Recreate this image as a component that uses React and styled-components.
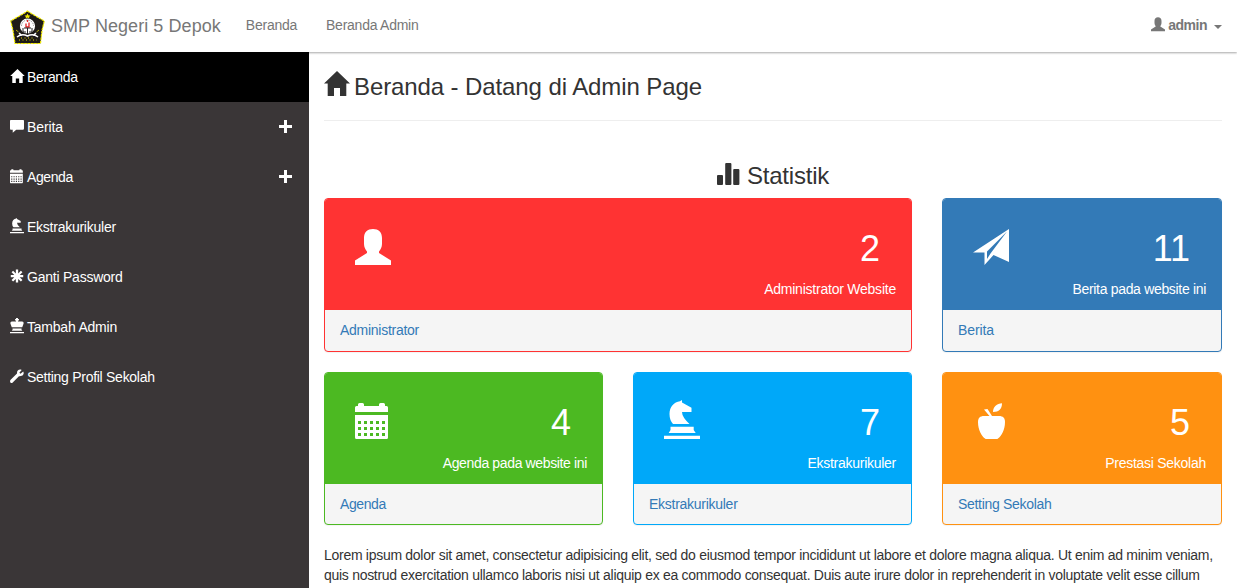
import React from "react";
import styled, { createGlobalStyle } from "styled-components";

const Global = createGlobalStyle`
  *, *::before, *::after { box-sizing: border-box; }
  html, body { margin: 0; height: 100%; overflow: hidden; }
  #root { height: 100%; }
  body {
    background: #fff;
    color: #333;
    font: 14px/20px "Liberation Sans", Arial, sans-serif;
  }
  a { text-decoration: none; }
`;

const Page = styled.div`
  display: flex;
  flex-direction: column;
  height: 100vh;
  overflow: hidden;
`;

const Navbar = styled.nav`
  flex: none;
  display: flex;
  align-items: center;
  height: 52px;
  padding: 0 15px 0 10px;
  box-shadow: 0 1px 2px rgba(0, 0, 0, 0.35);
`;

const Brand = styled.a`
  display: flex;
  align-items: center;
  gap: 6px;
  color: #777;
  font-size: 18px;
  letter-spacing: 0.06px;
  padding-bottom: 1px;
`;

const Crest = styled.svg`
  width: 35px;
  height: 35px;
  margin-top: 3px;
`;

const NavLink = styled.a`
  color: #777;
  margin-left: ${(p) => p.$gap}px;
  padding-bottom: 2px;
  letter-spacing: -0.25px;
`;

const UserMenu = styled.a`
  display: flex;
  align-items: center;
  margin-left: auto;
  padding-bottom: 2px;
  color: #777;
  font-weight: bold;
`;

const Caret = styled.span`
  margin: 3px 0 0 7px;
  border: 4px solid transparent;
  border-top-color: #777;
  border-bottom: 0;
`;

const Body = styled.div`
  flex: 1;
  display: flex;
  min-height: 0;
`;

const Sidebar = styled.aside`
  position: relative;
  flex: none;
  width: 309px;
  background: #3a3637;
`;

const SideItem = styled.a`
  display: flex;
  align-items: center;
  height: 50px;
  padding: 0 17px 0 10px;
  color: #fff;
  background: ${(p) => (p.$active ? "#000" : "transparent")};
`;

const SideLabel = styled.span`
  flex: 1;
  margin-left: 3px;
  letter-spacing: ${(p) => p.$spacing || 0}px;
`;

const Icon = styled.svg`
  flex: none;
  display: block;
  overflow: visible;
  fill: currentColor;
  width: ${(p) => p.$w}px;
  height: ${(p) => p.$h}px;
  margin-top: ${(p) => p.$drop || 0}px;
`;

const Main = styled.main`
  flex: 1;
  min-width: 0;
  padding: 0 15px;
`;

const PageTitle = styled.h1`
  display: flex;
  align-items: center;
  gap: 4px;
  height: 69px;
  margin: 0;
  padding-top: 2px;
  border-bottom: 1px solid #eee;
  color: #333;
  font-size: 24px;
  font-weight: normal;
  letter-spacing: -0.1px;
`;

const SectionTitle = styled.h2`
  display: flex;
  align-items: center;
  justify-content: center;
  gap: 7px;
  height: 26px;
  margin: 42px 0 9.4px;
  color: #333;
  font-size: 24px;
  font-weight: normal;
  letter-spacing: -0.2px;
`;

const CardGrid = styled.div`
  display: grid;
  grid-template-columns: 279px 279px 1fr;
  gap: 20px 30px;
`;

const Card = styled.section`
  grid-column: span ${(p) => p.$span || 1};
  height: 153.4px;
  border: 1px solid ${(p) => p.$color};
  border-radius: 4px;
  overflow: hidden;
  background: #f5f5f5;
  box-shadow: 0 1px 1px rgba(0, 0, 0, 0.05);
`;

const CardTop = styled.div`
  display: flex;
  justify-content: space-between;
  height: 111px;
  padding: 27px 15px 0 30px;
  background: ${(p) => p.$color};
  color: #fff;
`;

const Figures = styled.div`
  display: flex;
  flex-direction: column;
  align-items: flex-end;
`;

const Count = styled.span`
  margin: 2.75px 16px 0 0;
  font-size: 36px;
  line-height: 40px;
`;

const Caption = styled.span`
  margin-top: 10.25px;
  letter-spacing: ${(p) => p.$spacing}px;
`;

const CardLink = styled.a`
  display: block;
  padding: 10px 15px;
  color: #337ab7;
  letter-spacing: ${(p) => p.$spacing}px;
`;

const Copy = styled.p`
  margin: 20px 0 0;
  white-space: nowrap;
  letter-spacing: -0.286px;
`;

const shapes = {
  user: "M18 3C23.5 3 27 6 27 12V18C27 21 25.5 24 24 25.5V27L36 34.5V39H0V34.5L12 27V25.5C10.5 24 9 21 9 18V12C9 6 12.5 3 18 3Z",
  plane: "M36 3L0 26.5H11.5V39L20.5 29L36 36ZM34 5.5L17.5 27.5L14 33V25.5Z",
  calendar:
    "M3 6V4.5Q3 3 4.500 3H7.500Q9 3 9 4.500V6H24V4.500Q24 3 25.500 3H28.500Q30 3 30 4.500V6H31.500Q33 6 33 7.500V12H0V7.500Q0 6 1.500 6ZM0 15H33V37.500Q33 39 31.500 39H1.500Q0 39 0 37.500Z" +
    [21, 27, 33].map((y) => [3, 9, 15, 21, 27].map((x) => `M${x} ${y}v3h3v-3Z`).join("")).join(""),
  knight:
    "M18 0V2.500L27.500 7.700V12H18Q18 17 25.500 24H9Q5.500 20 5.500 14C5.500 7 10 2 16 1.300ZM6.500 26.700H29.700V30L31.700 33H4.700L6.500 30ZM0 35.700H36V39H0Z",
  apple:
    "M5 22C5 18 7 16 11 16H16.500L11 9.500L14.500 9L19 16H26C30 16 32 18 32 22C32 30 28.500 36 25 38.500Q24.500 39 23.500 39H13.500Q12.500 39 12 38.500C8.500 36 5 30 5 22ZM29 3.300C29 9 26 12 20 12C20 7 24 3.500 29 3.300Z",
  king: "M15.500 0H20.500V2.500H23V6.500H20.500V9H31Q36 9 35 14L31.500 24H4.500L1 14Q0 9 5 9H15.500V6.500H13V2.500H15.500ZM6.500 26.700H29.700V30L31.700 33H4.700L6.500 30ZM0 35.700H36V39H0Z",
  comment: "M2 5H34Q36 5 36 7V27Q36 30 33 30H16L7 38V30H2Q0 30 0 27V7Q0 5 2 5Z",
  asterisk:
    "M15 4H21V14L28 7L32 11L25 18H34V24H25L32 31L28 35L21 28V37H15V28L8 35L4 31L11 24H2V18H11L4 11L8 7L15 14Z",
  wrench: "M34 9L27 15L24 12L30 5C25 2 17 5 18 14L1 31Q-1 34 1 37Q4 40 7 37L23 21C32 22 38 16 34 9Z",
};

const Glyph = ({ name, size = 14, drop }) => (
  <Icon $w={size} $h={(size * 40) / 36} $drop={drop} viewBox="0 0 36 40">
    <path fillRule="evenodd" d={shapes[name]} />
  </Icon>
);

const Home = ({ w, h, box, drop }) => (
  <Icon $w={box} $h={h} $drop={drop} viewBox={`0 0 ${(box / w) * 26} 25`}>
    <path d="M13 0L26 12.500H22.300V25H16V17H10V25H3.700V12.500H0Z" />
  </Icon>
);

const Plus = () => (
  <Icon $w={13} $h={13} $drop={-1} viewBox="0 0 13 13">
    <path d="M5 0H8V5H13V8H8V13H5V8H0V5H5Z" />
  </Icon>
);

const Stats = () => (
  <Icon $w={23} $h={22} $drop={-4} viewBox="0 0 23 22">
    <rect x="0" y="12" width="6" height="10" rx="1" />
    <rect x="8.200" y="0" width="6.200" height="22" rx="1" />
    <rect x="16.200" y="6" width="6.200" height="16" rx="1" />
  </Icon>
);

const SchoolCrest = () => (
  <Crest viewBox="0 0 35 35">
    <path d="M17.500 1L22 4L34.300 11L32 20.500L30.500 33.500H5L3 20.500L.7 11L13 4Z" fill="#1d1a17" stroke="#f5ee00" strokeWidth="1.200" strokeDasharray="2.500 .8" />
    <circle cx="17.500" cy="16" r="7.600" fill="#fff" />
    <path d="M11.500 16A6 6 0 0 1 23.500 16" fill="none" stroke="#777" strokeWidth=".8" strokeDasharray="1.500 1" />
    <path d="M17.500 3.500L18.500 5.500H20.500L19 7L19.500 8.500L17.500 7.500L15.500 8.500L16 7L14.500 5.500H16.500Z" fill="#f5ee00" />
    <path d="M16 13.500V17H19V12.500M17.500 10V12" fill="none" stroke="#e02020" strokeWidth="1.300" />
    <path d="M13 18V22H16M22 18V22H19M17.500 18V24M14 18H21" fill="none" stroke="#222" strokeWidth="1" />
    <path d="M7 27Q12 23 17.500 26Q23 23 28 27M9 23L12 25.500M26 23L23 25.500" fill="none" stroke="#fff" strokeWidth="1.500" />
    <path d="M9 30H27M11 28H24" stroke="#e8df00" strokeWidth="1" strokeDasharray="1 2.500" />
    <path d="M6 20L8.500 22M29 20L26.500 22" stroke="#b5ae10" strokeWidth="1" />
  </Crest>
);

const menu = [
  { label: "Berita", icon: "comment", spacing: -0.12, expandable: true },
  { label: "Agenda", icon: "calendar", spacing: -0.4, expandable: true },
  { label: "Ekstrakurikuler", icon: "knight", spacing: -0.25 },
  { label: "Ganti Password", icon: "asterisk", spacing: -0.23 },
  { label: "Tambah Admin", icon: "king", spacing: -0.22 },
  { label: "Setting Profil Sekolah", icon: "wrench", spacing: -0.28 },
];

const cards = [
  { icon: "user", count: 2, caption: "Administrator Website", tight: -0.23, link: "Administrator", linkTight: -0.27, color: "#ff3333", span: 2 },
  { icon: "plane", count: 11, caption: "Berita pada website ini", tight: -0.32, link: "Berita", linkTight: -0.12, color: "#337ab7" },
  { icon: "calendar", count: 4, caption: "Agenda pada website ini", tight: -0.36, link: "Agenda", linkTight: -0.4, color: "#4cb922" },
  { icon: "knight", count: 7, caption: "Ekstrakurikuler", tight: -0.27, link: "Ekstrakurikuler", linkTight: -0.27, color: "#00a8f9" },
  { icon: "apple", count: 5, caption: "Prestasi Sekolah", tight: -0.27, link: "Setting Sekolah", linkTight: -0.3, color: "#ff9111" },
];

export default function App() {
  return (
    <Page>
      <Global />
      <Navbar>
        <Brand>
          <SchoolCrest />
          <span>SMP Negeri 5 Depok</span>
        </Brand>
        <NavLink $gap={25}>Beranda</NavLink>
        <NavLink $gap={29}>Beranda Admin</NavLink>
        <UserMenu>
          <Glyph name="user" drop={-3} />
          <SideLabel $spacing={-0.5}>admin</SideLabel>
          <Caret />
        </UserMenu>
      </Navbar>
      <Body>
        <Sidebar>
          <SideItem $active>
            <Home w={15} h={14} box={14} drop={-2} />
            <SideLabel $spacing={-0.3}>Beranda</SideLabel>
          </SideItem>
          {menu.map((m) => (
            <SideItem key={m.label}>
              <Glyph name={m.icon} drop={-3} />
              <SideLabel $spacing={m.spacing}>{m.label}</SideLabel>
              {m.expandable && <Plus />}
            </SideItem>
          ))}
        </Sidebar>
        <Main>
          <PageTitle>
            <Home w={26} h={25} box={26} drop={-7} />
            <span>Beranda - Datang di Admin Page</span>
          </PageTitle>
          <SectionTitle>
            <Stats />
            <span>Statistik</span>
          </SectionTitle>
          <CardGrid>
            {cards.map((c) => (
              <Card key={c.icon} $span={c.span} $color={c.color}>
                <CardTop $color={c.color}>
                  <Glyph name={c.icon} size={36} />
                  <Figures>
                    <Count>{c.count}</Count>
                    <Caption $spacing={c.tight}>{c.caption}</Caption>
                  </Figures>
                </CardTop>
                <CardLink $spacing={c.linkTight}>{c.link}</CardLink>
              </Card>
            ))}
          </CardGrid>
          <Copy>
            Lorem ipsum dolor sit amet, consectetur adipisicing elit, sed do eiusmod tempor incididunt ut labore et dolore magna aliqua. Ut enim ad minim veniam,
            <br />
            quis nostrud exercitation ullamco laboris nisi ut aliquip ex ea commodo consequat. Duis aute irure dolor in reprehenderit in voluptate velit esse cillum
          </Copy>
        </Main>
      </Body>
    </Page>
  );
}
